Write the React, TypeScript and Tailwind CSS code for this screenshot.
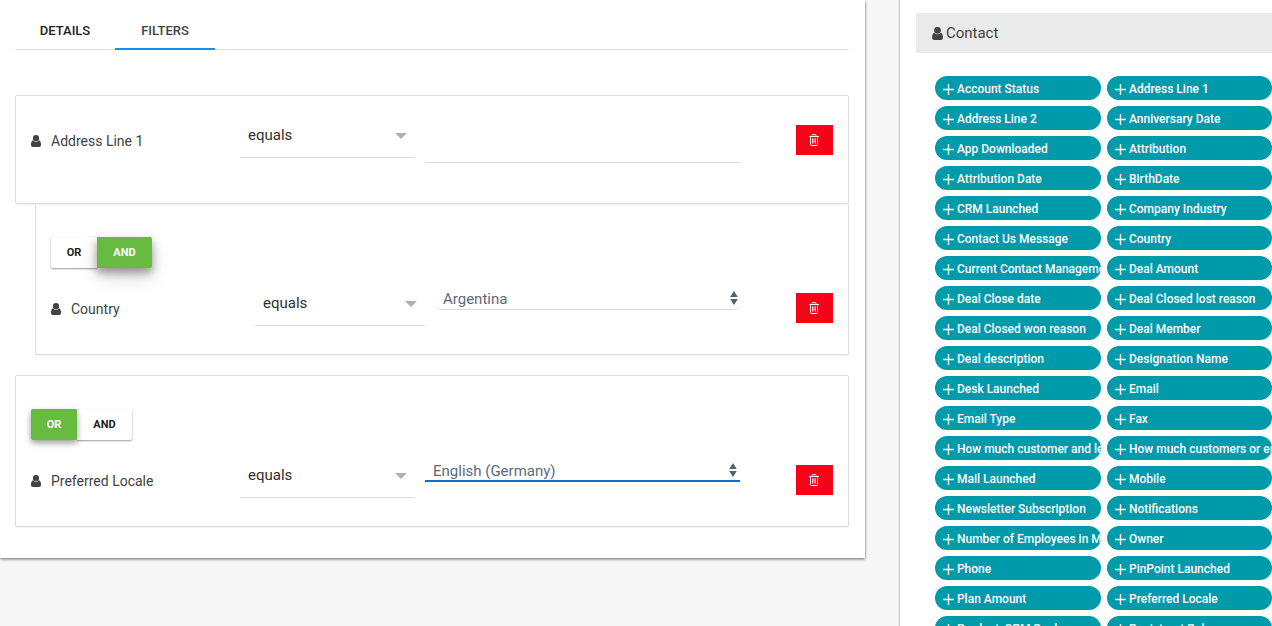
import { useState } from 'react'

type Join = 'OR' | 'AND'

const contactFields = [
  'Account Status', 'Address Line 1',
  'Address Line 2', 'Anniversary Date',
  'App Downloaded', 'Attribution',
  'Attribution Date', 'BirthDate',
  'CRM Launched', 'Company Industry',
  'Contact Us Message', 'Country',
  'Current Contact Management', 'Deal Amount',
  'Deal Close date', 'Deal Closed lost reason',
  'Deal Closed won reason', 'Deal Member',
  'Deal description', 'Designation Name',
  'Desk Launched', 'Email',
  'Email Type', 'Fax',
  'How much customer and lead', 'How much customers or emp',
  'Mail Launched', 'Mobile',
  'Newsletter Subscription', 'Notifications',
  'Number of Employees in Ma', 'Owner',
  'Phone', 'PinPoint Launched',
  'Plan Amount', 'Preferred Locale',
  'Product_CRM Deal', 'Registrant Role',
]

// ——————————— Icons ———————————
function UserIcon({ className }: { className: string }) {
  return (
    <svg viewBox="0 0 10 12" className={className} fill="currentColor" aria-hidden="true">
      <path d="M5 0a3.100 3.100 0 0 1 3.100 3.100A3.100 3.100 0 0 1 5 6.300 3.100 3.100 0 0 1 1.900 3.100 3.100 3.100 0 0 1 5 0Z" />
      <path d="M2.200 5.200C3 6.200 3.900 6.700 5 6.700s2-.5 2.800-1.500C9.500 5.500 10 7.600 10 9.800 10 11.200 9.300 12 8.200 12H1.800C.7 12 0 11.200 0 9.800c0-2.200.5-4.300 2.200-4.600Z" />
    </svg>
  )
}

function TrashIcon() {
  return (
    <svg viewBox="0 0 12 12" className="size-3" fill="none" stroke="currentColor" aria-hidden="true">
      <path d="M1 2.500h10M4 2.500V1.400C4 .9 4.300.6 4.800.6h2.400c.5 0 .8.300.8.800v1.100M2.500 2.800v7.700c0 .6.300 1 .9 1h5.200c.6 0 .9-.4.900-1V2.800" />
      <path d="M4.500 4.300v5.200M6 4.300v5.200M7.500 4.300v5.200" strokeWidth=".8" />
    </svg>
  )
}

function PlusIcon() {
  return (
    <svg viewBox="0 0 11 11" className="size-[11px] shrink-0" stroke="currentColor" strokeWidth="1.4" aria-hidden="true">
      <path d="M5.500 0v11M0 5.500h11" />
    </svg>
  )
}

// ——————————— Filter rows ———————————
function JoinToggle({ value, onChange }: { value: Join; onChange: (v: Join) => void }) {
  const on = 'relative bg-[#66bb40] text-white'
  const off = 'bg-white text-[#212121] shadow-[0_1px_2px_rgba(0,0,0,0.4)]'
  return (
    <div className="flex h-[31px] text-[11px] font-bold">
      <button
        onClick={() => onChange('OR')}
        className={`w-[46px] rounded-l-xs pt-px ${value === 'OR' ? `${on} shadow-[0_3px_6px_rgba(0,0,0,0.4)]` : off}`}
      >
        OR
      </button>
      <button
        onClick={() => onChange('AND')}
        className={`w-[55px] rounded-r-xs pt-px ${value === 'AND' ? `${on} shadow-[0_5px_8px_rgba(0,0,0,0.35),0_8px_20px_rgba(0,0,0,0.15)]` : off}`}
      >
        AND
      </button>
    </div>
  )
}

function FieldName({ name, className }: { name: string; className: string }) {
  return (
    <div className={`flex h-[46px] shrink-0 items-center gap-[10px] text-sm text-[#424242] ${className}`}>
      <UserIcon className="h-3 w-[10px]" />
      <span>{name}</span>
    </div>
  )
}

function Operator({ name, className }: { name: string; className: string }) {
  return (
    <div className={`relative shrink-0 ${className}`}>
      <select
        aria-label={`${name} operator`}
        className="block h-[46px] w-full appearance-none border-b border-[#dcdcdc] bg-transparent px-2 pt-[2px] text-[15px] text-[#303030] outline-none"
      >
        <option>equals</option>
        <option>not equals</option>
      </select>
      <svg viewBox="0 0 12 6" className="pointer-events-none absolute top-[21px] right-2 h-[6px] w-3 fill-[#b0b0b0]">
        <path d="M0 0h12L6 6Z" />
      </svg>
    </div>
  )
}

function ValueSelect({ name, option, className, arrows }: { name: string; option: string; className: string; arrows: string }) {
  return (
    <div className="relative w-full">
      <select
        aria-label={`${name} value`}
        className={`block h-6 w-full appearance-none bg-transparent px-2 pt-[2px] text-[15px] text-[#5b6b7d] outline-none ${className}`}
      >
        <option>{option}</option>
      </select>
      <svg viewBox="0 0 8 14" className={`pointer-events-none absolute top-[5px] h-[14px] w-2 fill-[#506274] ${arrows}`}>
        <path d="M4 0 7.800 6H.2ZM4 14 .2 8h7.600Z" />
      </svg>
    </div>
  )
}

function DeleteButton({ name }: { name: string }) {
  return (
    <button aria-label={`Delete ${name}`} className="mt-[13px] flex h-[30px] w-[37px] shrink-0 items-center justify-center bg-[#fb0018] pb-px text-white">
      <TrashIcon />
    </button>
  )
}

export default function App() {
  const [countryJoin, setCountryJoin] = useState<Join>('AND')
  const [localeJoin, setLocaleJoin] = useState<Join>('OR')

  return (
    <div className="flex h-screen items-start gap-[34px] overflow-hidden bg-[#f7f7f7] font-[Roboto,sans-serif]">
      <main className="w-[68%] bg-white pr-4 pb-[31px] pl-[15px] shadow-[0_1px_3px_rgba(0,0,0,0.6)]">
        <div className="flex h-[50px] border-b border-[#dedede] pt-3 text-[13px] font-medium" role="tablist">
          <button role="tab" aria-selected="false" className="-mb-px h-[38px] w-[100px] text-[#212121]">DETAILS</button>
          <button role="tab" aria-selected="true" className="-mb-px h-[38px] w-[100px] border-b-2 border-[#0a91f5] pt-[2px] text-[#424242]">FILTERS</button>
        </div>

        <section className="mt-[45px] flex h-[109px] items-start rounded-xs border border-[#dedede] px-[15px] pt-4 shadow-[0_1px_1px_rgba(0,0,0,0.05)]">
          <FieldName name="Address Line 1" className="w-[209px] pt-3" />
          <Operator name="Address Line 1" className="w-[175px]" />
          <input
            aria-label="Address Line 1 value"
            className="ml-[10px] h-[51px] min-w-0 flex-1 border-b border-[#dcdcdc] bg-transparent px-2 text-[15px] outline-none"
          />
          <div className="ml-14 flex"><DeleteButton name="Address Line 1" /></div>
        </section>

        <section className="ml-5 h-[151px] rounded-b-xs border border-t-0 border-[#dedede] px-[15px] pt-[33px] shadow-[0_1px_1px_rgba(0,0,0,0.05)]">
          <JoinToggle value={countryJoin} onChange={setCountryJoin} />
          <div className="mt-3 flex items-start">
            <FieldName name="Country" className="w-[204px] pt-3" />
            <Operator name="Country" className="w-[170px]" />
            <div className="ml-[10px] flex flex-1 pt-[6px]">
              <ValueSelect name="Country" option="Argentina" className="rounded-md border-b border-[#dcdcdc]" arrows="right-[3px]" />
            </div>
            <div className="ml-[55px] flex"><DeleteButton name="Country" /></div>
          </div>
        </section>

        <section className="mt-5 h-[152px] rounded-xs border border-[#dedede] px-[15px] pt-[33px] shadow-[0_1px_1px_rgba(0,0,0,0.05)]">
          <JoinToggle value={localeJoin} onChange={setLocaleJoin} />
          <div className="mt-3 flex items-start">
            <FieldName name="Preferred Locale" className="w-[209px] pt-3" />
            <Operator name="Preferred Locale" className="w-[175px]" />
            <div className="ml-[10px] flex flex-1 pt-[6px]">
              <ValueSelect name="Preferred Locale" option="English (Germany)" className="border-b-2 border-[#0a6fd0]" arrows="right-[3px]" />
            </div>
            <div className="ml-14 flex"><DeleteButton name="Preferred Locale" /></div>
          </div>
        </section>
      </main>

      <aside className="min-w-0 flex-1 border-l border-[#cfcfcf] bg-white pt-[13px] pl-4 shadow-[0_0_2px_rgba(0,0,0,0.2)]">
        <h2 className="flex h-10 items-center gap-[3px] bg-[#eaeaea] pl-4 text-[15px] text-[#424242]">
          <UserIcon className="h-[13px] w-[11px]" />
          Contact
        </h2>
        <div className="mt-[23px] grid grid-cols-[166fr_165fr] gap-[6px] pl-[19px]">
          {contactFields.map((field) => (
            <button
              key={field}
              className="flex h-6 min-w-0 items-center gap-[3px] overflow-hidden rounded-full bg-[#009bab] pt-[2px] pl-2 text-xs font-medium whitespace-nowrap text-white"
            >
              <PlusIcon />
              {field}
            </button>
          ))}
        </div>
      </aside>
    </div>
  )
}
